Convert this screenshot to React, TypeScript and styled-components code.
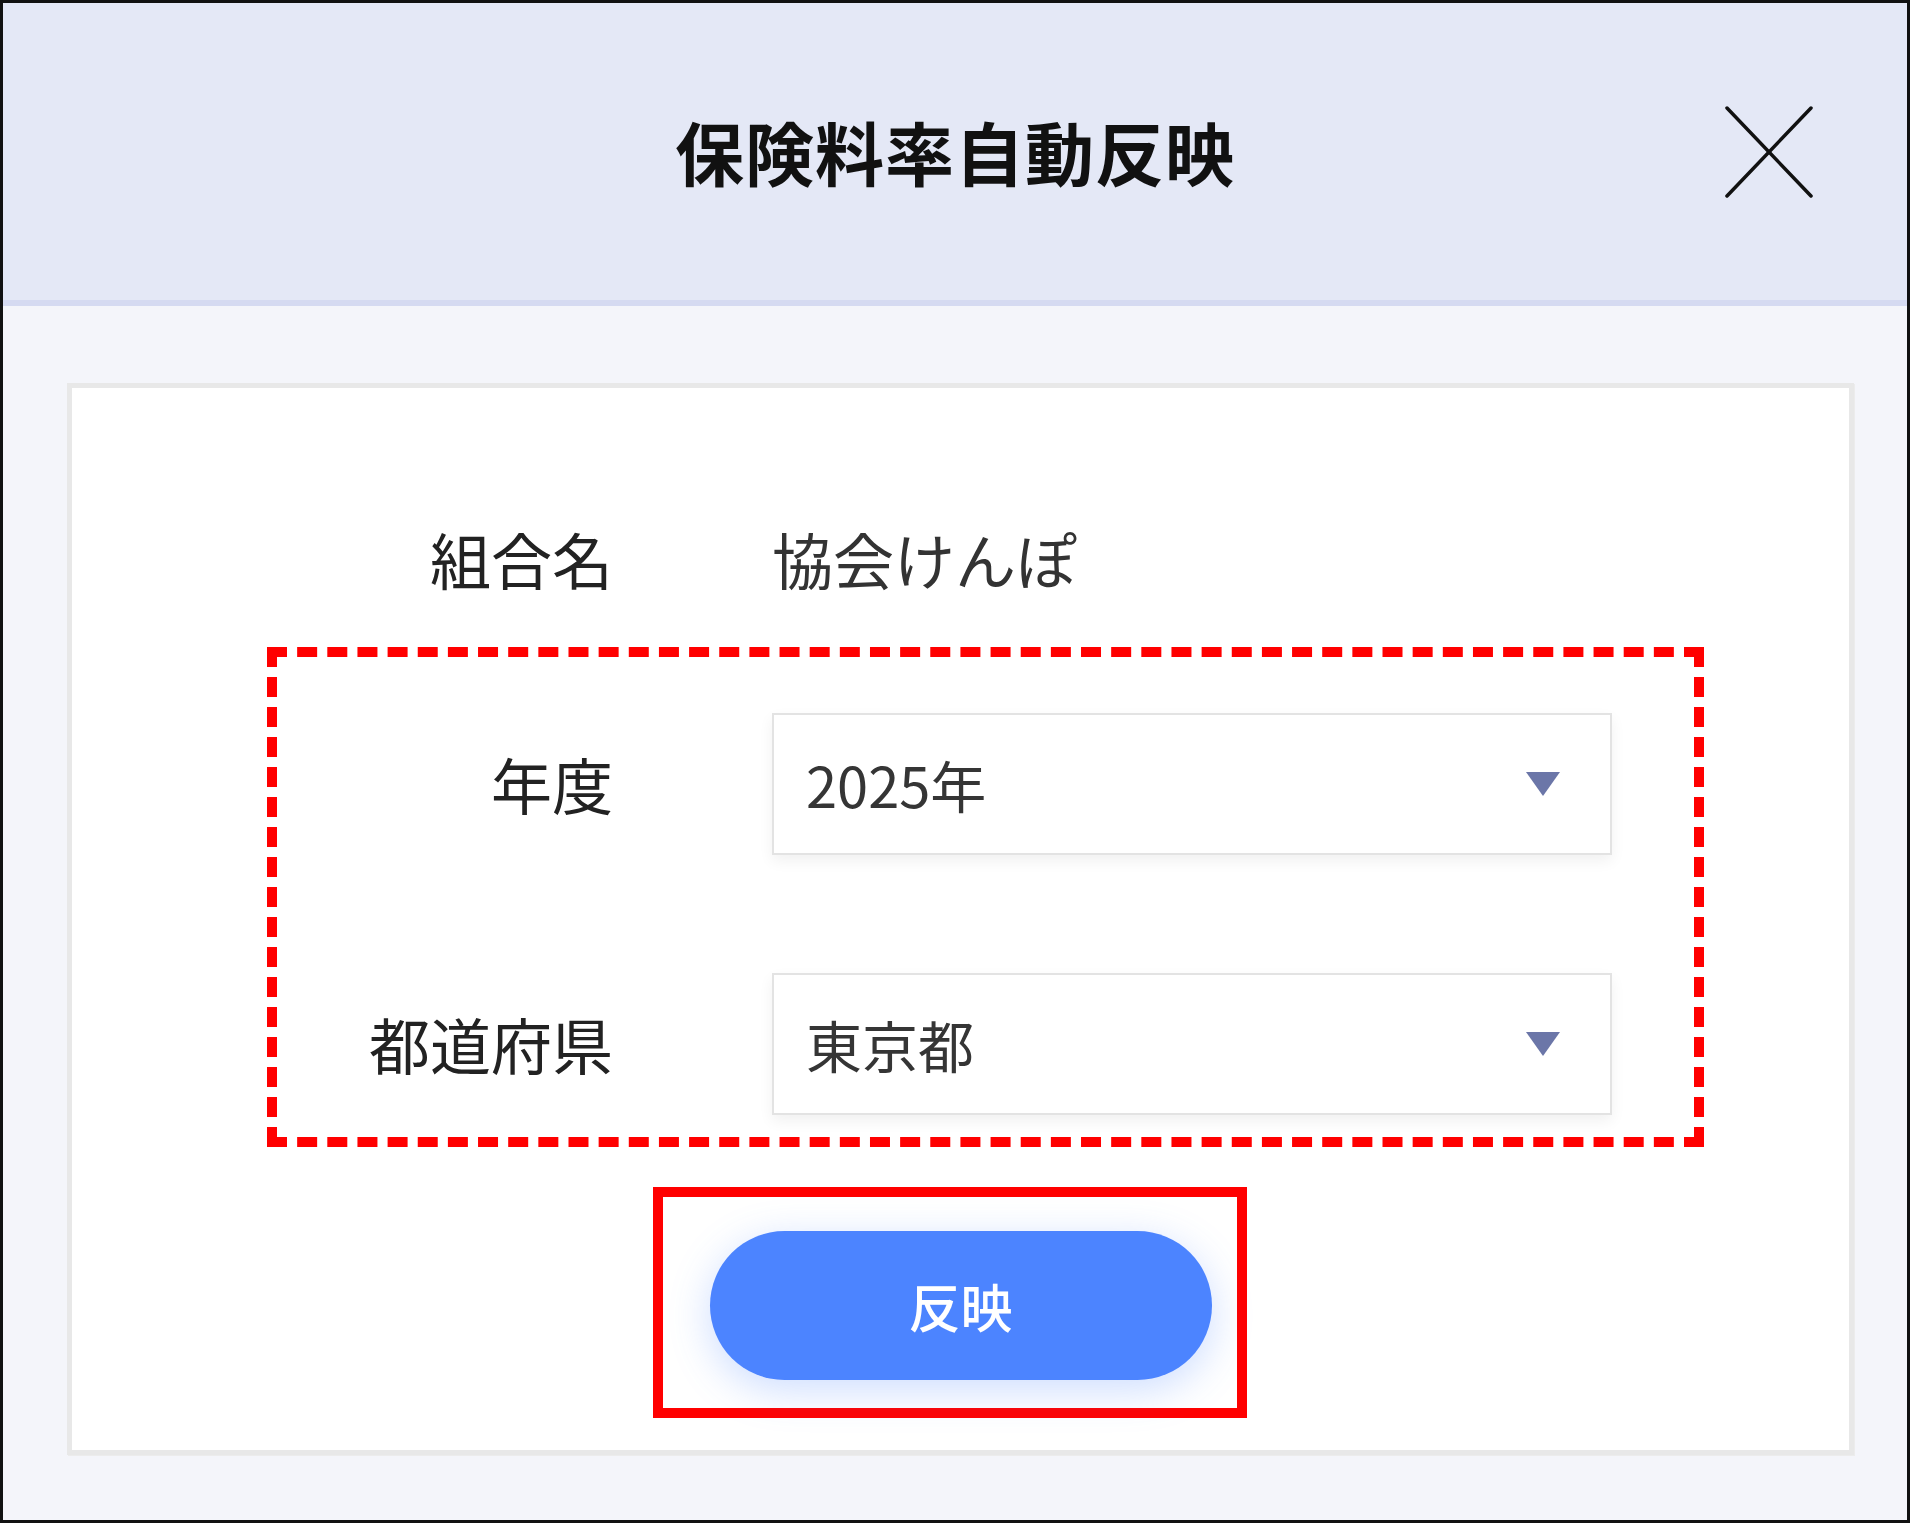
import styled, { createGlobalStyle } from "styled-components";

const GlobalStyle = createGlobalStyle`
  html, body {
    margin: 0;
    padding: 0;
    background: #ffffff;
  }
  body {
    font-family: "Noto Sans CJK JP", "Noto Sans", sans-serif;
    color: #222;
  }
  * {
    box-sizing: border-box;
  }
`;

const Frame = styled.div`
  width: 1910px;
  height: 1523px;
  border: 3px solid #111;
  display: flex;
  flex-direction: column;
  background: #f4f5fa;
`;

const Header = styled.header`
  height: 303px;
  flex-shrink: 0;
  display: grid;
  grid-template-columns: 1fr auto 1fr;
  align-items: center;
  background: #e4e8f6;
  border-bottom: 6px solid #d5daf1;
`;

const Title = styled.h1`
  grid-column: 2;
  margin: 0;
  font-size: 69px;
  font-weight: 700;
  letter-spacing: 1px;
  color: #111;
  line-height: 1;
`;

const CloseButton = styled.button`
  grid-column: 3;
  justify-self: end;
  margin-right: 94px;
  padding: 0;
  border: none;
  background: none;
  display: flex;
  cursor: pointer;
`;

const Body = styled.main`
  flex: 1;
  padding: 77px 53px 65px 64px;
  display: flex;
`;

const Card = styled.section`
  flex: 1;
  background: #fff;
  border: 5px solid #e8e8e8;
  box-shadow: 1px 1px 0 #ececec;
  padding: 100px 0 30px;
  display: flex;
  flex-direction: column;
`;

const Group = styled.div<{ $highlight?: boolean; $pad?: string }>`
  margin-left: 195px;
  width: 1437px;
  border: 10px ${(p) => (p.$highlight ? "dashed #ff0000" : "solid transparent")};
  border-top-width: ${(p) => (p.$highlight ? "10px" : "0")};
  border-bottom-width: ${(p) => (p.$highlight ? "10px" : "0")};
  padding: ${(p) => p.$pad || "0"};
  display: flex;
  flex-direction: column;
  gap: 118px;
`;

const Row = styled.div`
  display: grid;
  grid-template-columns: 336px 840px;
  column-gap: 159px;
  align-items: center;
  min-height: 142px;
`;

const Label = styled.div`
  text-align: right;
  font-size: 61px;
  line-height: 1.4;
  color: #222;
`;

const Value = styled.div`
  font-size: 61px;
  line-height: 1.4;
  color: #333;
`;

const Select = styled.div`
  height: 142px;
  border: 2px solid #e3e3e3;
  background: #fff;
  box-shadow: 0 6px 14px rgba(0, 0, 0, 0.06);
  padding: 0 50px 0 32px;
  display: flex;
  align-items: center;
  justify-content: space-between;
  cursor: pointer;
`;

const SelectText = styled.span`
  font-size: 56px;
  color: #353535;
  line-height: 1;
`;

const Marker = styled.div`
  align-self: center;
  margin: 40px 22px 0 0;
  border: 10px solid #ff0000;
  padding: 34px 25px 28px 47px;
  display: flex;
`;

const ReflectButton = styled.button`
  width: 502px;
  height: 149px;
  border: none;
  border-radius: 75px;
  background: #4c84ff;
  color: #fff;
  font-family: "Noto Sans CJK JP", "Noto Sans", sans-serif;
  font-size: 52px;
  font-weight: 500;
  box-shadow: 0 10px 40px rgba(76, 132, 255, 0.28);
  cursor: pointer;
`;

const Arrow = () => (
  <svg width="34" height="24" viewBox="0 0 34 24">
    <polygon points="0,0 34,0 17,24" fill="#6b76a8" />
  </svg>
);

const CloseIcon = () => (
  <svg width="88" height="92" viewBox="0 0 88 92">
    <line x1="2" y1="2" x2="86" y2="90" stroke="#111" strokeWidth="3.5" strokeLinecap="round" />
    <line x1="86" y1="2" x2="2" y2="90" stroke="#111" strokeWidth="3.5" strokeLinecap="round" />
  </svg>
);

const DropDown = ({ value }: { value: string }) => (
  <Select>
    <SelectText>{value}</SelectText>
    <Arrow />
  </Select>
);

export default function App() {
  return (
    <>
      <GlobalStyle />
      <Frame>
        <Header>
          <Title>保険料率自動反映</Title>
          <CloseButton aria-label="閉じる">
            <CloseIcon />
          </CloseButton>
        </Header>
        <Body>
          <Card>
            <Group>
              <Row>
                <Label>組合名</Label>
                <Value>協会けんぽ</Value>
              </Row>
            </Group>
            <Group $highlight $pad="56px 0 22px" style={{ marginTop: 17 }}>
              <Row>
                <Label>年度</Label>
                <DropDown value="2025年" />
              </Row>
              <Row>
                <Label>都道府県</Label>
                <DropDown value="東京都" />
              </Row>
            </Group>
            <Marker>
              <ReflectButton>反映</ReflectButton>
            </Marker>
          </Card>
        </Body>
      </Frame>
    </>
  );
}
